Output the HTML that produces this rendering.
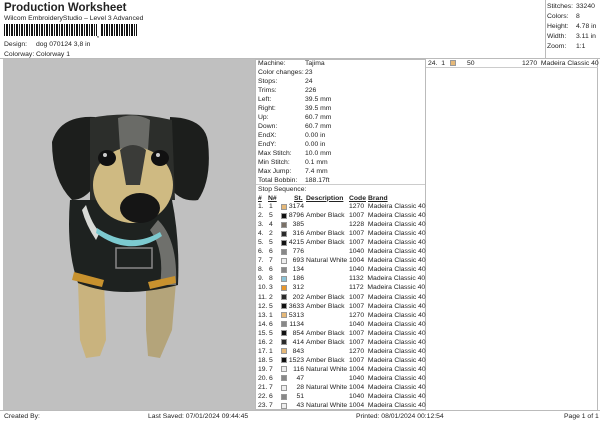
<!DOCTYPE html>
<html><head><meta charset="utf-8"><style>
*{margin:0;padding:0;box-sizing:border-box}
body{width:600px;height:424px;background:#fff;font-family:"Liberation Sans",sans-serif;font-size:6.8px;color:#222;position:relative;overflow:hidden}
.a{position:absolute;white-space:nowrap;line-height:9px}
.sw{position:absolute;width:6px;height:6px;border:1px solid #999}
.r{text-align:right}
</style></head><body>
<div class="a" style="left:4px;top:1px;font-size:11.5px;font-weight:bold;line-height:14px">Production Worksheet</div>
<div class="a" style="left:4px;top:14px">Wilcom EmbroideryStudio – Level 3 Advanced</div>
<div class="a" style="left:4px;top:24px;height:12px;width:133px;background:repeating-linear-gradient(90deg,#111 0 1px,#fff 1px 2px,#111 2px 4px,#fff 4px 5px,#111 5px 6px,#fff 6px 7px,#111 7px 9px,#fff 9px 10px)"></div>
<div class="a" style="left:97px;top:24px;width:4px;height:13px;background:#fff"></div>
<div class="a" style="left:97px;top:31px;font-weight:bold">,</div>
<div class="a" style="left:4px;top:40px">Design:</div><div class="a" style="left:36px;top:40px">dog 070124 3,8 in</div>
<div class="a" style="left:4px;top:50px">Colorway:</div><div class="a" style="left:36px;top:50px">Colorway 1</div>
<div class="a" style="left:0;top:58px;width:600px;border-top:1px solid #bbb"></div>
<div class="a" style="left:3px;top:59px;width:252px;height:351px;background:#c0c0c0"></div>
<svg class="a" style="left:3px;top:59px" width="252" height="351" viewBox="3 59 252 351">
<g>
<path d="M78 282 L104 280 L106 340 L100 356 L86 358 L80 340 Z" fill="#c9b37e"/>
<path d="M146 284 L176 282 L172 330 L160 358 L148 356 L146 330 Z" fill="#b4a47a"/>
<path d="M70 200 Q66 250 78 283 Q120 300 178 285 Q180 240 172 200 Z" fill="#1e2220"/>
<path d="M158 220 Q178 240 176 285 L160 285 Q165 250 150 230 Z" fill="#6f706c"/>
<path d="M74 272 L104 280 L102 287 L72 280 Z" fill="#c8922e"/>
<path d="M148 282 L175 276 L176 283 L150 289 Z" fill="#c8922e"/>
<path d="M52 142 Q60 115 95 117 L95 185 Q85 200 72 200 Q52 180 52 142 Z" fill="#1c1e1c"/>
<path d="M208 142 Q205 118 170 117 L168 185 Q180 203 198 200 Q212 180 208 142 Z" fill="#1c1e1c"/>
<path d="M90 118 Q130 110 172 120 L175 200 L90 200 Z" fill="#2c2e2b"/>
<path d="M118 118 Q135 112 150 120 L148 150 L120 150 Z" fill="#6a6b67"/>
<ellipse cx="133" cy="185" rx="40" ry="38" fill="#cfba82"/>
<path d="M120 150 Q133 140 146 150 L140 185 L126 185 Z" fill="#3a3b38"/>
<ellipse cx="107" cy="158" rx="9" ry="8" fill="#111"/>
<ellipse cx="160" cy="158" rx="9" ry="8" fill="#111"/>
<circle cx="105" cy="155" r="2" fill="#ccc"/><circle cx="158" cy="155" r="2" fill="#ccc"/>
<ellipse cx="140" cy="208" rx="20" ry="15" fill="#151515"/>
<path d="M86 205 Q92 225 100 232 L96 240 Q86 225 82 210 Z" fill="#d8dad6"/>
<path d="M97 228 Q130 250 160 232 L162 236 Q130 258 96 233 Z" fill="#7ccad0"/>
<rect x="116" y="248" width="36" height="20" fill="none" stroke="#888" stroke-width="1.5"/>
</g>
</svg>
<div class="a" style="left:255px;top:59px;width:171px;height:351px;border:1px solid #bbb"></div>
<div class="a" style="left:426px;top:59px;width:172px;height:351px;border-right:1px solid #bbb"></div>
<div class="a" style="left:426px;top:67px;width:172px;border-top:1px solid #ccc"></div>
<div class="a" style="left:545px;top:0;height:58px;border-left:1px solid #bbb"></div>
<div class="a" style="left:547px;top:2px;line-height:10px">Stitches:<br>Colors:<br>Height:<br>Width:<br>Zoom:</div>
<div class="a" style="left:576px;top:2px;line-height:10px">33240<br>8<br>4.78 in<br>3.11 in<br>1:1</div>
<div class="a" style="left:428px;top:59px">24.&nbsp; 1</div><div class="sw" style="left:450px;top:60px;background:#e5b878"></div>
<div class="a" style="left:467px;top:59px">50</div><div class="a" style="left:522px;top:59px">1270&nbsp; Madeira Classic 40</div>
<div class="a" style="left:258px;top:58.5px;line-height:9px">Machine:<br>Color changes:<br>Stops:<br>Trims:<br>Left:<br>Right:<br>Up:<br>Down:<br>EndX:<br>EndY:<br>Max Stitch:<br>Min Stitch:<br>Max Jump:<br>Total Bobbin:</div>
<div class="a" style="left:305px;top:58.5px;line-height:9px">Tajima<br>23<br>24<br>226<br>39.5 mm<br>39.5 mm<br>60.7 mm<br>60.7 mm<br>0.00 in<br>0.00 in<br>10.0 mm<br>0.1 mm<br>7.4 mm<br>188.17ft</div>
<div class="a" style="left:256px;top:184px;width:169px;border-top:1px solid #ccc"></div>
<div class="a" style="left:258px;top:184.5px">Stop Sequence:</div>
<div class="a" style="left:258px;top:193.5px;font-weight:bold;text-decoration:underline">#</div>
<div class="a" style="left:268px;top:193.5px;font-weight:bold;text-decoration:underline">N#</div>
<div class="a" style="left:294px;top:193.5px;font-weight:bold;text-decoration:underline">St.</div>
<div class="a" style="left:306px;top:193.5px;font-weight:bold;text-decoration:underline">Description</div>
<div class="a" style="left:349px;top:193.5px;font-weight:bold;text-decoration:underline">Code</div>
<div class="a" style="left:368px;top:193.5px;font-weight:bold;text-decoration:underline">Brand</div>
<div id="rows"></div>
<div class="a" style="left:0;top:410px;width:600px;border-top:1px solid #bbb"></div>
<div class="a" style="left:4px;top:412px">Created By:</div>
<div class="a" style="left:148px;top:412px">Last Saved: 07/01/2024 09:44:45</div>
<div class="a" style="left:356px;top:412px">Printed: 08/01/2024 00:12:54</div>
<div class="a" style="left:564px;top:412px">Page 1 of 1</div>
<script>
var d=[[1,"#e5b878",3174,"",1270],[5,"#111",8796,"Amber Black",1007],[4,"#7a7066",385,"",1228],[2,"#2a2a2a",316,"Amber Black",1007],[5,"#111",4215,"Amber Black",1007],[6,"#888",776,"",1040],[7,"#eee",693,"Natural White",1004],[6,"#888",134,"",1040],[8,"#8cc4d8",186,"",1132],[3,"#e8962a",312,"",1172],[2,"#2a2a2a",202,"Amber Black",1007],[5,"#111",3633,"Amber Black",1007],[1,"#e5b878",5313,"",1270],[6,"#888",1134,"",1040],[5,"#111",854,"Amber Black",1007],[2,"#2a2a2a",414,"Amber Black",1007],[1,"#e5b878",843,"",1270],[5,"#111",1523,"Amber Black",1007],[7,"#eee",116,"Natural White",1004],[6,"#888",47,"",1040],[7,"#eee",28,"Natural White",1004],[6,"#888",51,"",1040],[7,"#eee",43,"Natural White",1004]];
var h="";d.forEach(function(r,i){var y=202+i*9.05;
h+='<div class="a" style="left:258px;top:'+y+'px">'+(i+1)+'.</div><div class="a" style="left:269px;top:'+y+'px">'+r[0]+'</div><div class="sw" style="left:281px;top:'+(y+1.5)+'px;background:'+r[1]+'"></div><div class="a r" style="left:284px;width:20px;top:'+y+'px">'+r[2]+'</div><div class="a" style="left:306px;top:'+y+'px">'+r[3]+'</div><div class="a" style="left:349px;top:'+y+'px">'+r[4]+'&nbsp; Madeira Classic 40</div>';});
document.getElementById("rows").innerHTML=h;
</script>
</body></html>
